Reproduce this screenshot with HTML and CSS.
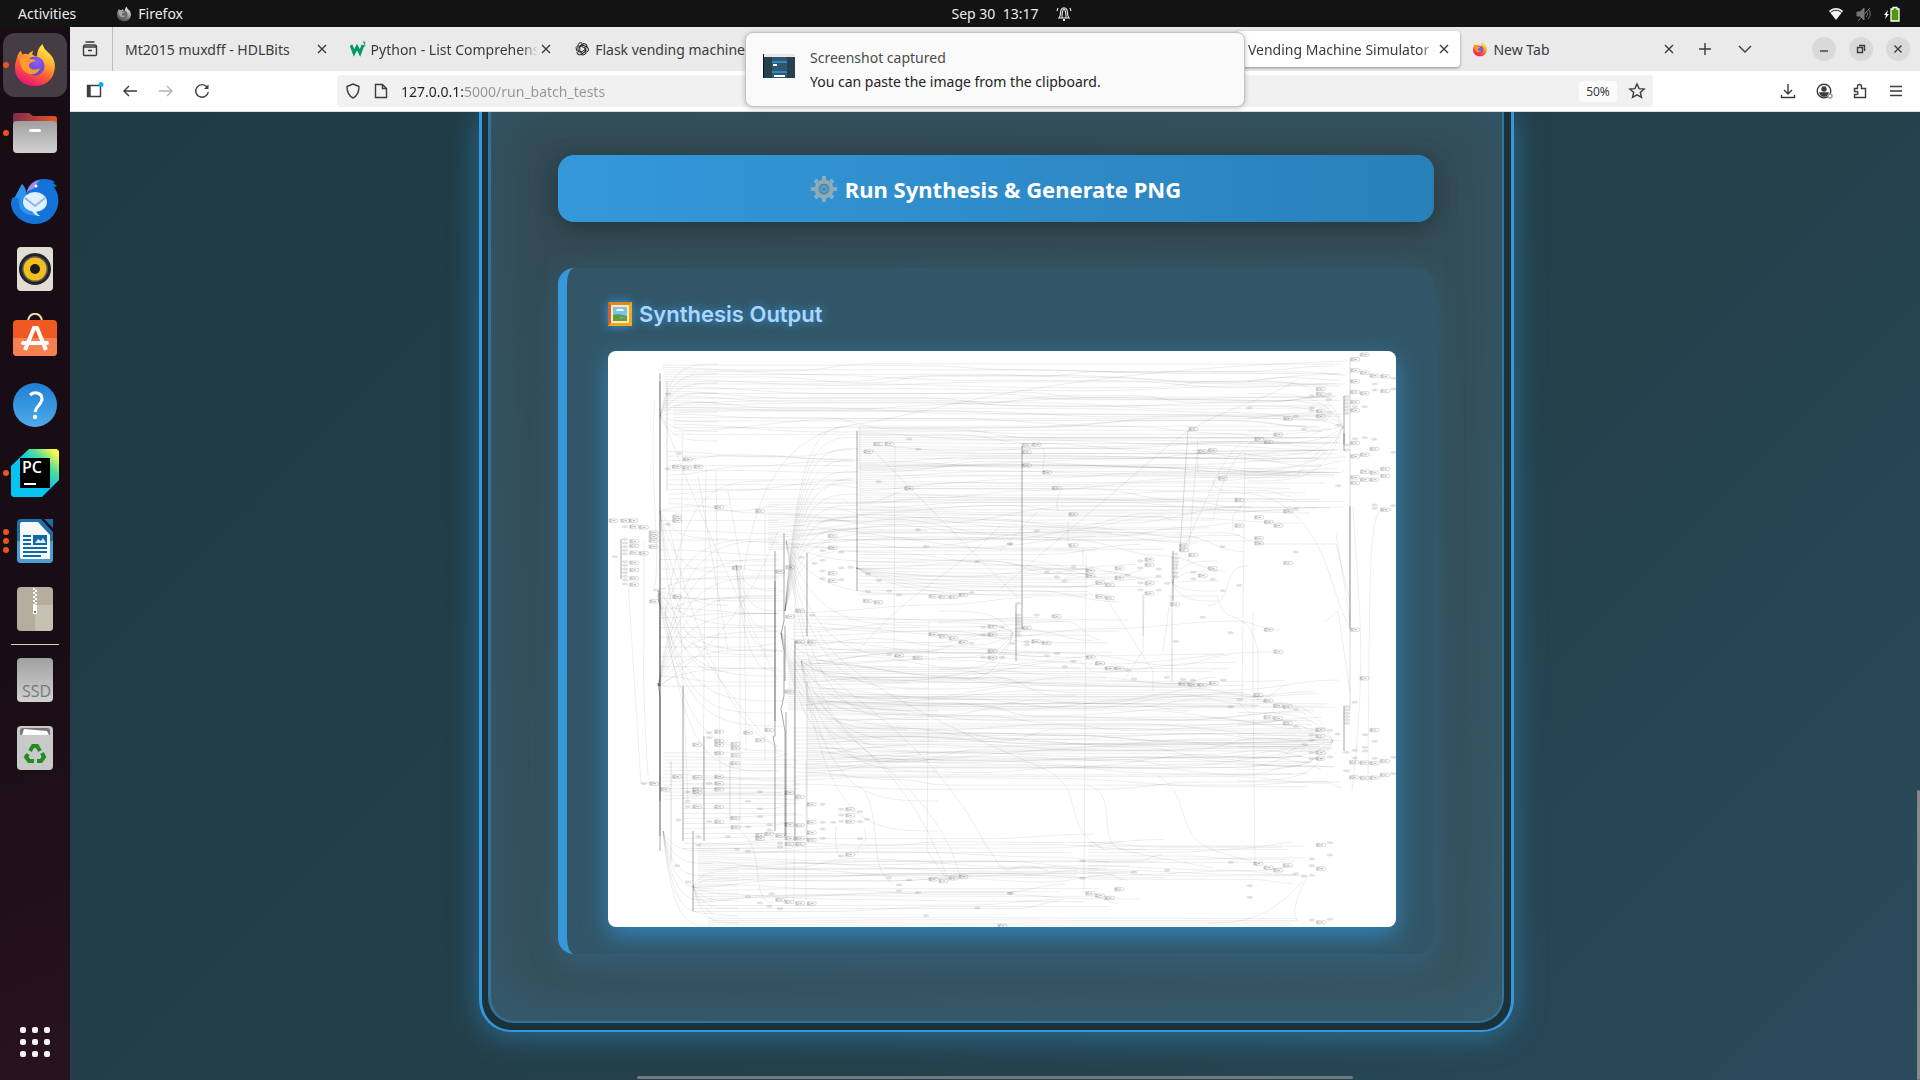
FILE: index.html
```html
<!DOCTYPE html>
<html lang="en">
<head>
<meta charset="utf-8">
<title>Vending Machine Simulator</title>
<link rel="stylesheet" href="styles.css">
</head>
<body>
<svg class="defs" aria-hidden="true">
  <defs>
    <linearGradient id="fx-body" x1=".8" y1="0" x2=".3" y2="1"><stop offset="0" stop-color="#fff44f"/><stop offset=".35" stop-color="#ffb32e"/><stop offset=".65" stop-color="#ff5a36"/><stop offset="1" stop-color="#e5127c"/></linearGradient>
    <radialGradient id="fx-globe" cx=".6" cy=".3" r=".8"><stop offset="0" stop-color="#9059ff"/><stop offset="1" stop-color="#5046b8"/></radialGradient>
    <linearGradient id="blue" x1="0" y1="0" x2="0" y2="1"><stop offset="0" stop-color="#1f7fd6"/><stop offset="1" stop-color="#4fabe8"/></linearGradient>
    <linearGradient id="grey" x1="0" y1="0" x2="0" y2="1"><stop offset="0" stop-color="#a0a0a0"/><stop offset="1" stop-color="#d2d2d2"/></linearGradient>
    <linearGradient id="pc" x1="0" y1="1" x2="1" y2="0"><stop offset=".5" stop-color="#07c3f2"/><stop offset=".72" stop-color="#4fdc9a"/><stop offset=".92" stop-color="#fcf84a"/></linearGradient>
    <linearGradient id="folder" x1="0" y1="0" x2="1" y2="0"><stop offset="0" stop-color="#7d2c50"/><stop offset="1" stop-color="#e95420"/></linearGradient>
    <symbol id="firefox" viewBox="0 0 48 48">
      <path fill="url(#fx-body)" d="M5 17c1-4 2-6 4-8l2 4c2-1 4-1 6 0 1-2 3-3 5-4l-1 4c2 1 3 2 5 2 0-5 2-10 6-13 1 5 4 7 7 10 5 5 7 11 5 19-2 9-10 15-20 15C12 46 3 38 3 27c0-4 1-7 2-10z"/>
      <circle cx="24" cy="25" r="10" fill="url(#fx-globe)"/>
      <path fill="#ff9a2e" d="M8 17c4-2 8 0 12 1 3 0 5 1 4 2-2 1-5 1-6 3-1 3 1 5 4 6 3 0 5-1 7-1-2 5-7 7-12 5-6-2-9-9-9-16z"/>
    </symbol>
    <symbol id="close" viewBox="0 0 16 16"><path d="M4 4l8 8M12 4l-8 8" fill="none" stroke="currentColor" stroke-width="1.4"/></symbol>
  </defs>
</svg>

<header class="topbar">
  <div class="topbar-left"><button class="top-btn">Activities</button><button class="top-btn app"><svg class="s16 mono" viewBox="0 0 48 48"><use href="#firefox"/></svg>Firefox</button></div>
  <button class="top-btn clock">Sep 30&nbsp; 13:17
    <svg class="s16" viewBox="0 0 16 16" fill="none" stroke="#eee" stroke-width="1.1"><path d="M3 12c2-2 1-4 2-8 1-3 5-3 6 0 1 4 0 6 2 8zM6 12c0-5 0-8 2-9 2 1 2 4 2 9M2 2l-1 3M14 2l1 3"/><path d="M7 14h2" stroke-width="2"/></svg>
  </button>
  <div class="tray">
    <svg class="s16" viewBox="0 0 16 16"><path d="M1 5c4-4 10-4 14 0L8 14z" fill="#f2f2f2"/><path d="M2.500 6.500c3-3 8-3 11 0" stroke="#141414" fill="none"/></svg>
    <svg class="s16" viewBox="0 0 16 16" stroke="#777" fill="none"><path d="M1 6h3l4-4v12l-4-4H1z" fill="#777"/><path d="M10 5c2 2 2 4 0 6M12 3c3 3 3 7 0 10M2 15L14 2"/></svg>
    <svg class="s16" viewBox="0 0 16 16"><path d="M4 4L0 9h2l-1 4 4-5H3z" fill="#fff"/><path d="M7 3h2V1.500h4V3h2v12H7z" fill="#4e9a06" stroke="#fff" stroke-width="1.300"/></svg>
  </div>
</header>

<div class="desktop">
  <nav class="dock" aria-label="Dock">
    <button class="tile active" aria-label="Firefox"><i class="dots"><b></b></i><svg viewBox="0 0 48 48"><use href="#firefox"/></svg></button>
    <button class="tile" aria-label="Files"><i class="dots"><b></b></i><svg viewBox="0 0 48 48"><path d="M2 7q0-3 3-3h13l4 3h21q3 0 3 3v12H2z" fill="url(#folder)"/><rect x="2" y="12" width="44" height="32" rx="4" fill="url(#grey)"/><rect x="18" y="20" width="12" height="3" rx="1.500" fill="#fff"/></svg></button>
    <button class="tile" aria-label="Thunderbird"><svg viewBox="0 0 48 48"><path d="M4 20l7-13c3 3 4 6 4 9C18 6 25 2 33 2c5 0 8 1 11 3l-2 1 4 3-3 1c4 6 5 12 4 18-2 11-11 19-23 19C11 47 0 37 0 26l1-5z" fill="#1373d9"/><path d="M4 20l7-13c3 3 4 6 4 9-1 12 3 20 12 22-14 3-21-8-19-16z" fill="#2f93ee"/><path d="M16 15c2-7 6-11 13-12-4 3-3 6-6 8-2 2-5 2-7 4z" fill="#a18ae8"/><ellipse cx="24" cy="25" rx="12" ry="10" fill="#dff1ff"/><path d="M14 21l10 8 10-8" fill="none" stroke="#8bb9e4" stroke-width="2"/><path d="M21 34c2 4 5 5 8 5-3-2-4-4-4-6z" fill="#dff1ff"/><circle cx="25" cy="9" r="1.500" fill="#fff"/></svg></button>
    <button class="tile" aria-label="Rhythmbox"><svg viewBox="0 0 48 48"><rect x="6" y="2" width="36" height="44" rx="4" fill="#e2ddd2"/><circle cx="24" cy="24" r="16" fill="#23232e"/><circle cx="24" cy="24" r="13" fill="#555"/><circle cx="24" cy="24" r="11.500" fill="#f0bf1e"/><circle cx="24" cy="24" r="5" fill="#1c1c1c"/></svg></button>
    <button class="tile" aria-label="Software"><svg viewBox="0 0 48 48"><path d="M17 9c0-11 14-11 14 0" fill="none" stroke="#f3d9a8" stroke-width="2"/><rect x="2" y="7" width="44" height="36" rx="4" fill="#f05a22"/><path d="M2 25h44v14q0 4-4 4H6q-4 0-4-4z" fill="#f58052"/><path d="M14 37l9-22h3l9 22" fill="none" stroke="#fff" stroke-width="4"/><path d="M12 30h24" stroke="#fff" stroke-width="4" stroke-linecap="round"/></svg></button>
    <button class="tile" aria-label="Help"><svg viewBox="0 0 48 48"><circle cx="24" cy="24" r="22" fill="url(#blue)"/><path d="M19 14c5-4 12-2 12 4 0 5-6 7-7 13" fill="none" stroke="#fff" stroke-width="3"/><circle cx="24" cy="36" r="2.200" fill="#fff"/></svg></button>
    <button class="tile" aria-label="PyCharm"><i class="dots"><b></b></i><svg viewBox="0 0 48 48"><path d="M18 0h28l2 2v29L31 48H2l-2-2V17z" fill="url(#pc)"/><path d="M9 9h30v30H9z"/><path d="M13 34h12v2H13z" fill="#fff"/><text x="11" y="24" class="pc-text">PC</text></svg></button>
    <button class="tile" aria-label="LibreOffice Writer"><i class="dots"><b></b><b></b><b></b></i><svg viewBox="0 0 48 48"><path d="M10 2h20l12 13v27q0 4-4 4H10q-4 0-4-4V6q0-4 4-4z" fill="#1d6fa8"/><path d="M6 24h36v18q0 4-4 4H10q-4 0-4-4z" fill="#4a9fd2"/><path d="M11 5h16l12 13v24H11q-2 0-2-2V7q0-2 2-2z" fill="#f6f8fa"/><path d="M33 2h9v9z" fill="#1c6ea6"/><path d="M12 19h8M12 23h8M12 27h8M12 31h24M12 35h24M12 39h18" stroke="#0f69a3" stroke-width="2"/><rect x="22" y="18" width="14" height="10" fill="#0f69a3"/><path d="M24 26l3-4 3 2 2-3 3 5z" fill="#dceaf4"/></svg></button>
    <button class="tile" aria-label="Archive Manager"><svg viewBox="0 0 48 48"><rect x="6" y="2" width="36" height="44" rx="4" fill="#b5ad9d"/><path d="M24 20h18v22q0 4-4 4H24z" fill="#c6c0b3"/><path d="M22 3h2v2h2v2h-2v2h2v2h-2v2h2v2h-2v2h2v2h-2v2h-2v-2h2v-2h-2v-2h2v-2h-2v-2h2V9h-2V7h2V5h-2z" fill="#fff"/><path d="M22 20h4v9h-4z" fill="#fff"/><path d="M23 26h2v2h-2z" fill="#777"/></svg></button>
    <hr>
    <button class="tile" aria-label="SSD drive"><svg viewBox="0 0 48 48"><rect x="6" y="2" width="36" height="44" rx="4" fill="url(#grey)"/><text x="11" y="41" class="ssd-text">SSD</text></svg></button>
    <button class="tile" aria-label="Trash"><svg viewBox="0 0 48 48"><rect x="6" y="2" width="36" height="44" rx="4" fill="#c9c9c9"/><path d="M9 11V7q0-3 3-3h24q3 0 3 3v4z" fill="#777"/><path d="M11 11l2-6 23 2 2 4z" fill="#fff"/><g fill="none" stroke="#228b22" stroke-width="4"><path d="M19 27l3-5h4l3 5"/><path d="M31 29l2 4-3 4h-4"/><path d="M23 37h-5l-3-4 2-3"/></g></svg></button>
    <button class="tile apps" aria-label="Show Applications"><svg viewBox="0 0 48 48"><g fill="#f4f2f3"><rect x="9" y="9" width="6" height="6" rx="2"/><rect x="21" y="9" width="6" height="6" rx="2"/><rect x="33" y="9" width="6" height="6" rx="2"/><rect x="9" y="21" width="6" height="6" rx="2"/><rect x="21" y="21" width="6" height="6" rx="2"/><rect x="33" y="21" width="6" height="6" rx="2"/><rect x="9" y="33" width="6" height="6" rx="2"/><rect x="21" y="33" width="6" height="6" rx="2"/><rect x="33" y="33" width="6" height="6" rx="2"/></g></svg></button>
  </nav>

  <div class="browser">
    <div class="tabstrip">
      <button class="icon-btn recent" aria-label="Recent tabs"><svg viewBox="0 0 16 16"><path d="M1.500 6h13v7.500q0 1-1 1h-11q-1 0-1-1zM1.500 6q0-2 2-2h9q2 0 2 2M3.500 1h9M6 9.500h4"/></svg></button>
      <div class="tabs">
        <div class="tab"><span class="title">Mt2015 muxdff - HDLBits</span><button class="x" aria-label="Close tab"><svg><use href="#close"/></svg></button></div>
        <div class="tab"><svg class="s16" viewBox="0 0 16 16"><path d="M1 4l3 8 3-6 3 6 3-8" fill="none" stroke="#059862" stroke-width="3"/><path d="M13 1h2l-1 2q1 0 1 1.500T13 5" fill="none" stroke="#059862"/></svg><span class="title fade">Python - List Comprehens</span><button class="x" aria-label="Close tab"><svg><use href="#close"/></svg></button></div>
        <div class="tab"><svg class="s16" viewBox="0 0 16 16" fill="none" stroke="#222" stroke-width="1"><g id="petals"><path d="M8 2q-4-1-4 3v4l4 2.500M4 4.500Q1 6 2.500 9.500l4 2L10.500 9"/></g><use href="#petals" transform="rotate(120 8 8)"/><use href="#petals" transform="rotate(240 8 8)"/></svg><span class="title">Flask vending machine</span></div>
        <div class="tab"></div>
        <div class="tab"></div>
        <div class="tab current"><span class="title fade">Vending Machine Simulator -</span><button class="x" aria-label="Close tab"><svg><use href="#close"/></svg></button></div>
        <div class="tab"><svg class="s16" viewBox="0 0 48 48"><use href="#firefox"/></svg><span class="title">New Tab</span><button class="x" aria-label="Close tab"><svg><use href="#close"/></svg></button></div>
      </div>
      <button class="icon-btn wide" aria-label="New tab"><svg viewBox="0 0 16 16"><path d="M8 2v12M2 8h12"/></svg></button>
      <button class="icon-btn wide" aria-label="List all tabs"><svg viewBox="0 0 16 16"><path d="M2 5l6 6 6-6"/></svg></button>
      <div class="window-controls">
        <button aria-label="Minimize"><svg viewBox="0 0 16 16"><path d="M4 10h8"/></svg></button>
        <button aria-label="Restore"><svg viewBox="0 0 16 16"><path d="M4.500 6.500h5v5h-5zM6 4.500h5.500V10"/></svg></button>
        <button aria-label="Close"><svg viewBox="0 0 16 16"><path d="M4.500 4.500l7 7M11.500 4.500l-7 7"/></svg></button>
      </div>
    </div>

    <div class="toolbar">
      <button class="icon-btn" aria-label="Sidebars"><svg viewBox="0 0 16 16"><path d="M1.500 2.500h13v11h-13zM4 2.500v11"/><path d="M3 3v10" stroke-width="2"/><circle cx="15" cy="1.500" r="2.500" class="badge"/></svg></button>
      <button class="icon-btn" aria-label="Back"><svg viewBox="0 0 16 16"><path d="M15 8H2M7 3L2 8l5 5"/></svg></button>
      <button class="icon-btn off" aria-label="Forward"><svg viewBox="0 0 16 16"><path d="M1 8h13M9 3l5 5-5 5"/></svg></button>
      <button class="icon-btn" aria-label="Reload"><svg viewBox="0 0 16 16"><path d="M13 4a6.300 6.300 0 1 0 1.300 5"/><path d="M14.500 1.500v4.500H10z" fill="currentColor" stroke="none"/></svg></button>
      <div class="urlbar">
        <svg class="s16" viewBox="0 0 16 16"><path d="M8 1l6 2.500c0 6-2 9.500-6 11.500C4 13 2 9.500 2 3.500z"/></svg>
        <svg class="s16" viewBox="0 0 16 16"><path d="M2.500 1.500h7l4 4v9h-11zM9.500 1.500v4h4"/></svg>
        <input type="text" class="url" aria-label="Address" value="127.0.0.1:5000/run_batch_tests">
        <button class="zoom">50%</button>
        <button class="icon-btn" aria-label="Bookmark"><svg viewBox="0 0 16 16"><path d="M8 1l2.100 4.600 5 .5-3.800 3.300 1.200 5L8 11.800l-4.500 2.600 1.200-5L.9 6.100l5-.5z"/></svg></button>
      </div>
      <div class="toolbar-end">
        <button class="icon-btn" aria-label="Downloads"><svg viewBox="0 0 16 16"><path d="M8 1v10M4 7l4 4 4-4M1.500 12v2.500h13V12"/></svg></button>
        <button class="icon-btn" aria-label="Account"><svg viewBox="0 0 16 16"><circle cx="8" cy="8" r="6.800"/><circle cx="8" cy="6" r="2" fill="currentColor"/><path d="M4 10h8q-1 3-4 3t-4-3z" fill="currentColor"/><circle cx="14" cy="13" r="2" fill="#fff" stroke="#999"/></svg></button>
        <button class="icon-btn" aria-label="Extensions"><svg viewBox="0 0 16 16"><path d="M2.500 5.500h3v-2q0-2 2-2t2 2v2h4v9h-11v-3h2q1.500 0 1.500-1.500T4.500 8.500h-2z"/></svg></button>
        <button class="icon-btn" aria-label="Menu"><svg viewBox="0 0 16 16"><path d="M2 3.500h12M2 8h12M2 12.500h12"/></svg></button>
      </div>
    </div>

    <main class="viewport">
      <div class="frame"><div class="panel">
        <button class="run"><svg class="gear" viewBox="0 0 26 26"><g stroke="#8aadbd" stroke-width="4"><path d="M13 0v26M0 13h26M4 4l18 18M22 4L4 22"/></g><circle cx="13" cy="13" r="9.500" fill="#8aadbd"/><circle cx="13" cy="13" r="4.500" fill="#5fa3cc" stroke="#5d8799" stroke-width="2"/><circle cx="13" cy="13" r="2" fill="#2f90d2"/></svg>Run Synthesis &amp; Generate PNG</button>
        <section class="output">
          <h3><svg class="picture" viewBox="0 0 24 24"><path d="M0 0h24v24H0z" fill="#e08a1c"/><path d="M0 0l3 3v18l-3 3z" fill="#c8633a"/><path d="M0 24l3-3h18V3l3-3v24z" fill="#f2a81d"/><path d="M3 3h18v18H3z" fill="#fbe9c0"/><path d="M5 5h14v14H5z" fill="#7cc3ea"/><path d="M5 13q5-2 14 1v5H5z" fill="#5f9e3a"/><path d="M8 9q1-3 4-2 3-1 4 2z" fill="#fff"/><path d="M11 15h7l-5 2z" fill="#58aee0"/></svg>Synthesis Output</h3>
          <svg class="netlist" id="netlist" viewBox="0 0 788 576" preserveAspectRatio="none" role="img" aria-label="Synthesised netlist"></svg>
        </section>
      </div></div>
      <div class="scroll-y"></div><div class="scroll-x"></div>
    </main>
  </div>
</div>

<aside class="toast" role="status">
  <svg class="thumb" viewBox="0 0 32 24"><path d="M0 0h32v24H0z" fill="#24414c"/><path d="M0 0h1v24H0z" fill="#111"/><path d="M1 0h31v3H1z" fill="#e9e9e9"/><path d="M9 3h15v21H9z" fill="#2d5870"/><path d="M9 8h15M9 18h15" stroke="#3498db" stroke-width="1.500"/><path d="M10 11h4M11 22h11" stroke="#fff" stroke-width="2"/></svg>
  <div><p class="toast-title">Screenshot captured</p><p>You can paste the image from the clipboard.</p></div>
</aside>
<script src="netlist.js"></script>
</body>
</html>
```
FILE: styles.css
```css
* { box-sizing: border-box; }
body { margin: 0; height: 100vh; overflow: hidden; display: flex; flex-direction: column; background: #1a0f17; font-family: "Noto Sans", "Open Sans", sans-serif; font-size: 14px; color: #3b3b40; }
button { border: 0; padding: 0; background: none; font: inherit; color: inherit; }
svg { display: block; flex: none; }
.defs { position: absolute; width: 0; height: 0; }
.s16 { width: 16px; height: 16px; }

.topbar { flex: none; height: 27px; display: grid; grid-template-columns: 1fr auto 1fr; align-items: center; background: #131313; color: #eaeaea; padding: 0 20px 0 18px; }
.topbar-left { display: flex; gap: 40px; }
.top-btn { display: flex; align-items: center; gap: 6px; }
.clock { gap: 18px; padding-left: 106px; }
.mono { filter: grayscale(1); }
.tray { display: flex; justify-content: flex-end; gap: 12px; }

.desktop { flex: 1; min-height: 0; display: flex; }
.dock { flex: none; width: 70px; display: flex; flex-direction: column; align-items: center; gap: 4px; padding: 6px 2px; background: linear-gradient(160deg, #190d15 60%, #28121f); }
.tile { position: relative; flex: none; width: 64px; height: 64px; border-radius: 12px; display: grid; place-items: center; }
.tile.active { background: #463c43; }
.tile svg { width: 48px; height: 48px; }
.tile.active svg { width: 46px; height: 46px; }
.dots { position: absolute; left: 0; top: 0; height: 100%; display: flex; flex-direction: column; justify-content: center; gap: 3px; }
.dots b { width: 6px; height: 6px; border-radius: 50%; background: #e95420; }
.dock hr { flex: none; width: 48px; height: 1px; border: 0; margin: -1px 0; background: #d5cfd2; }
.apps { margin-top: auto; }
.pc-text { font: 600 16px "Open Sans", sans-serif; fill: #fff; }
.ssd-text { font: 16px "Open Sans", sans-serif; fill: #777; }

.browser { flex: 1; min-width: 0; display: flex; flex-direction: column; }
.tabstrip { flex: none; height: 44px; display: flex; align-items: center; background: #eaeaea; padding-right: 10px; }
.icon-btn { width: 36px; height: 32px; display: grid; place-items: center; flex: none; }
.icon-btn.wide { width: 40px; }
.icon-btn svg, .urlbar > svg, .window-controls svg { width: 16px; height: 16px; fill: none; stroke: currentColor; stroke-width: 1.4; overflow: visible; }
.icon-btn .badge { fill: #00b3f4; stroke: none; }
.off { color: #b5b5b5; }
.icon-btn.recent { width: 43px; height: 44px; padding-right: 2px; border-right: 1px solid #bcbcbc; }
.tabs { display: flex; min-width: 0; flex: 0 1 1572px; }
.tab { flex: 1 1 0; min-width: 0; height: 36px; display: flex; align-items: center; gap: 5px; padding: 0 8px 0 12px; border-radius: 4px; }
.tab.current { background: #fff; box-shadow: 0 1px 3px #888; }
.title { flex: 1; min-width: 0; white-space: nowrap; }
.fade { -webkit-mask-image: linear-gradient(90deg, #000 calc(100% - 16px), transparent); mask-image: linear-gradient(90deg, #000 calc(100% - 16px), transparent); }
.x { width: 16px; height: 16px; margin-left: -5px; }
.x svg { width: 16px; height: 16px; }
.window-controls { display: flex; gap: 13px; margin-left: auto; }
.window-controls button { width: 24px; height: 24px; border-radius: 50%; background: #d9d9d9; display: grid; place-items: center; }

.toolbar { flex: none; height: 41px; display: flex; align-items: center; background: #fff; border-bottom: 1px solid #dcdcdc; padding: 0 6px; }
.urlbar { flex: 0 1 1316px; height: 32px; margin-left: 117px; display: flex; align-items: center; gap: 12px; background: #f1f1f1; border-radius: 4px; padding: 0 0 0 8px; }
.url { flex: 1; min-width: 0; border: 0; padding: 0; font: inherit; color: transparent; background: linear-gradient(90deg, #222 64px, #949494 64px); -webkit-background-clip: text; background-clip: text; }
.zoom { width: 38px; height: 21px; border-radius: 3px; background: #fbfbfb; font-size: 12px; }
.urlbar .icon-btn { width: 32px; margin-left: -8px; }
.toolbar-end { display: flex; margin-left: auto; }

.viewport { position: relative; flex: 1; min-height: 0; overflow: hidden; padding-left: 3px; background: linear-gradient(135deg, #203b44, #24404b 60%, #294b5b); }
.frame { max-width: 1035px; margin: 0 auto; border: solid #3498db; border-width: 0 3px 2px; border-radius: 0 0 32px 32px; padding: 0 7px 7px 6px; background: #1c323b; box-shadow: 0 4px 30px rgba(52, 152, 219, .5); }
.panel { border: solid #32749c; border-width: 0 2px 2px 3px; border-radius: 0 0 26px 26px; padding: 43px 68px 67px 67px; display: flex; flex-direction: column; gap: 46px; background: linear-gradient(160deg, #334a53, #36535e); box-shadow: inset 0 -10px 60px rgba(52, 152, 219, .18); }
.run { height: 67px; border-radius: 16px; display: flex; align-items: center; justify-content: center; gap: 8px; color: #fff; font-size: 22px; font-weight: 700; background: linear-gradient(90deg, #3498db, #2980b9); box-shadow: 0 6px 25px rgba(0, 0, 0, .3); }
.gear { width: 26px; height: 26px; }
.output { border-left: 9px solid #3498db; border-radius: 16px; padding: 33px 38px 27px 41px; background: #325668; box-shadow: 0 8px 30px rgba(52, 152, 219, .25); }
.output h3 { display: flex; align-items: center; gap: 7px; margin: 0 0 24px; font: 600 22px/26px "Inter", sans-serif; color: #add6ff; text-shadow: 0 0 10px #3498db; }
.picture { width: 24px; height: 24px; filter: drop-shadow(0 0 5px #3498db); }
.netlist { width: 100%; height: auto; border-radius: 8px; background: #fff; box-shadow: 0 8px 25px rgba(52, 152, 219, .7); }
.netlist path { fill: none; stroke: #000; stroke-width: 1; }
.netlist .wire { stroke-opacity: .07; }
.netlist .bus { stroke-opacity: .35; }
.netlist .outline { stroke-opacity: .14; }
.netlist .pin { stroke-opacity: .11; }
.netlist .label { stroke-opacity: .28; }
.scroll-y { position: absolute; right: 0; bottom: 0; width: 3px; height: 30%; background: #83898c; border-radius: 2px; }
.scroll-x { position: absolute; left: 567px; right: 567px; bottom: 1px; height: 3px; background: #71797d; border-radius: 2px; }

.toast { position: absolute; top: 32px; left: calc(50% + 35px); transform: translateX(-50%); width: 500px; height: 75px; display: flex; align-items: flex-start; gap: 15px; padding: 13px 17px; border: 1px solid #c4c4c4; border-radius: 8px; background: #fafafa; box-shadow: 0 1px 5px rgba(0, 0, 0, .25); }
.toast p { margin: 0; line-height: 24px; color: #222; }
.toast .toast-title { color: #4a4a4a; }
.thumb { width: 32px; height: 24px; margin-top: 8px; }
```
FILE: netlist.js
```js
// Draws the synthesised netlist: wire bundles, fan-outs, buses and cells.
const svg = document.getElementById("netlist");
let seed = 7;
const rnd = () => (seed = (seed * 16807) % 2147483647) / 2147483647;
const add = (cls, d, parent = svg) => {
  const p = document.createElementNS("http://www.w3.org/2000/svg", "path");
  p.setAttribute("class", cls);
  p.setAttribute("d", d);
  p.setAttribute("vector-effect", "non-scaling-stroke");
  parent.append(p);
};

// [x start, x end, top, bottom, wires, drift, end spread]
const bundles = [
  [55, 738, 13, 60, 20, 16, 20], [65, 738, 55, 85, 9, 25, 80], [250, 738, 74, 120, 20, 16, 30],
  [252, 738, 112, 165, 24, 16, 60], [60, 250, 98, 155, 12, 22, 10], [160, 660, 150, 200, 20, 34, 120],
  [250, 560, 180, 245, 18, 26, 80], [52, 170, 155, 330, 18, 12, 0], [185, 520, 260, 320, 18, 40, 100],
  [180, 680, 310, 360, 26, 26, 100], [200, 735, 345, 425, 36, 26, 50], [185, 735, 375, 435, 15, 18, 50],
  [55, 190, 400, 450, 14, 10, 20], [75, 200, 430, 500, 14, 8, 20], [90, 560, 492, 534, 20, 18, 100],
  [480, 700, 490, 530, 12, 12, 30], [85, 560, 535, 562, 9, 16, 150], [100, 690, 566, 575, 4, 2, 10]
];
for (const [x0, end, top, bottom, n, drift, spread] of bundles) {
  for (let i = 0; i < n; i++) {
    const x1 = end - rnd() * spread;
    let y = top + (bottom - top) * (i + .5) / n, x = x0;
    let d = `M${x} ${y}`;
    while (x < x1) {
      const nx = Math.min(x1, x + 50 + rnd() * 140);
      const ny = rnd() < .45 ? y : Math.max(5, Math.min(574, y + (rnd() - .5) * drift));
      d += `C${x + (nx - x) * .4} ${y} ${x + (nx - x) * .6} ${ny} ${nx} ${ny}`;
      x = nx; y = ny;
    }
    add("wire", d);
  }
}

// [hub x, hub y, end x, top, bottom, wires]
const fans = [
  [52, 65, 110, 13, 90, 9], [50, 335, 170, 190, 335, 9], [52, 160, 120, 155, 320, 6],
  [50, 240, 175, 225, 400, 8], [57, 262, 165, 130, 420, 6], [177, 260, 250, 75, 200, 12],
  [178, 190, 320, 180, 400, 8], [248, 217, 480, 218, 245, 7], [193, 310, 330, 300, 480, 7],
  [55, 480, 105, 500, 575, 7], [173, 282, 300, 300, 410, 8], [405, 282, 330, 260, 330, 7],
  [735, 76, 640, 30, 130, 9], [725, 390, 630, 350, 430, 8], [564, 232, 610, 210, 250, 5],
  [128, 214, 175, 220, 320, 6], [85, 535, 130, 520, 572, 8]
];
for (const [x, y, ex, top, bottom, n] of fans) {
  for (let i = 0; i < n; i++) {
    const ey = top + (bottom - top) * i / (n - 1);
    add("wire", `M${x} ${y}C${x + (ex - x) * .2} ${ey} ${x + (ex - x) * .5} ${ey} ${ex} ${ey}`);
  }
}

// long single nets
[
  "M136 220C150 120 190 80 250 73S420 20 740 10", "M265 99L410 247", "M392 175C350 220 300 240 250 300", "M392 238L560 95C600 60 660 50 690 28",
  "M430 160L392 200", "M20 233L33 432H50", "M36 190V290Q34 330 40 425", "M287 95L286 300", "M321 270L319 500L340 530",
  "M478 205L476 542", "M645 260V340L647 512", "M637 100L634 350", "M590 88L580 210", "M536 245L535 300L515 330", "M500 250L545 320V340",
  "M480 435C510 440 490 490 510 497S570 510 605 517", "M550 425C580 440 570 480 595 494S640 505 650 515", "M210 280C240 340 400 400 440 420S450 480 500 500",
  "M210 350C260 410 300 420 340 528", "M190 340C250 400 330 440 352 525", "M200 310C280 370 330 410 370 480S390 500 440 520", "M600 145C720 120 720 250 742 275", "M745 155C750 250 760 300 744 440",
  "M780 160C760 150 762 200 760 430", "M728 183L742 270", "M716 272L730 260L742 340", "M650 193H728L742 250", "M700 525C690 540 682 565 690 570", "M695 530C660 570 630 572 600 572",
  "M635 90C610 110 600 150 570 210C560 250 560 270 555 300", "M605 170C610 140 620 110 645 90", "M560 245H610C615 280 640 250 650 300V350", "M640 215C610 215 630 250 600 255",
  "M252 75V160", "M98 117L95 440", "M108 120L112 420", "M120 140L136 230L138 400", "M132 215V480C160 500 140 550 165 552", "M75 80L72 260L80 450", "M90 125L120 300", "M157 163V410",
  "M257 440C275 480 260 520 285 532", "M228 475Q226 500 232 506", "M256 475L258 488Q246 500 250 504", "M47 50C40 120 55 220 45 240", "M187 200L186 550", "M178 410V550", "M198 410V550",
  "M435 97C440 110 430 120 438 122M455 137Q446 148 450 160M460 170V195M475 196V215", "M590 98V122M607 125Q600 135 615 140M640 148L625 165V180",
  "M52 335C100 300 140 260 170 180M52 240C90 300 140 370 170 400M60 170C80 260 120 380 170 395M56 70C90 160 130 250 170 330"
].forEach(d => add("wire", d));

[
  "M52 22V240M52 242L50 245 52 255V335L50 332 52 345V485", "M52 30V500M52 240V450", "M176 182V270L173 283 176 300V345L173 358 177 380V485", "M167 200V370M165 386L167 395V480", "M177 275V330", "M167 230V385L165 386",
  "M249 80V240", "M199 202V285", "M13 188V228", "M75 335V490", "M85 480V560", "M414 95V278", "M408 253V310", "M565 200V250",
  "M742 155V278", "M736 45V100", "M736 355V400", "M187 290V490",
  "M96 385V490", "M736 82V93", "M178 361V485"
].forEach(d => add("bus", d));

[
  "M742 8V360", "M564 205V232M564 245V330", "M535 243V285", "M122 410V470", "M199 330V490", "M63 410V510", "M580 80L572 200", "M59 30V140"
].forEach(d => add("outline", d));

// cells by sheet tile: wide cells, then small pins
const tiles = [
  ["translate(-8 -11) scale(.3333)",
   "263,358 230,380 262,383 295,380 357,502 480,513 231,530 231,542 102,560 131,562 160,578 160,590 160,602 102,604 102,618 160,620 102,638 131,640 102,668 102,690 102,715 102,734 162,784 410,684 231,770 834,312 868,311 805,335 927,445 698,588 698,623 698,700 698,722 540,695 570,682 570,830 600,812 803,783 835,787 1000,769 1030,771 1060,771 1090,765 1177,860 1177,884 1000,883 1030,889 1060,895 40,542 75,542 100,542",
   "927,297 954,328 836,425 954,569 978,619 1132,665 1231,612 668,632 668,661 668,693 668,716 724,637 724,684 724,719 804,702 836,722 804,755 867,753 897,765 603,652 1115,758 75,560 75,598 75,609 75,620 75,631 75,642 75,665 75,676 75,687 75,698 75,709 75,720 75,732 45,650 752,682 643,670 205,162 238,340 203,386 203,553 170,750 637,825 1150,862 1150,886 1207,862"],
  ["translate(392 -11) scale(.3333)",
   "80,316 80,336 110,314 80,376 141,397 170,444 220,523 220,616 580,267 608,334 638,331 668,415 718,480 718,557 777,532 806,546 835,557 864,514 777,595 777,610 864,669 638,685 608,707 580,645 551,617 551,630 271,692 271,707 300,728 329,735 358,685 358,713 300,770 329,774 448,659 448,675 448,730 448,760 777,298 806,306 835,284 864,236 962,147 962,162 962,214 962,229 1094,44 1065,58 1065,91 1094,98 1123,107 1155,109 1065,124 1065,156 1094,160 1155,153 1065,186 1065,211 1065,309 1123,327 1094,344 1065,349 1155,387 1155,408 1094,395 1123,398 1065,412 1094,419 1123,419 1065,429 1155,509 806,869 1065,869 170,829 80,864 525,793",
   "748,203 911,268 1015,437 110,572 30,612 141,695 170,711 194,723 221,680 110,825 668,620 887,507 887,636 935,167 935,203 987,162 987,178 935,212 987,217 888,229 1180,115 1180,147 1124,132 1124,150 1065,200 1094,200 1065,296 1094,293 1123,298 1180,337 1124,495 1124,505 1180,497 421,663 421,684 421,729 421,750 476,687 476,708 476,750 382,706 580,697 580,717 638,718 668,752 718,736 608,832 692,878 502,730 1015,256 527,642 527,655 527,665 527,675 527,685 527,698 527,710 1040,170 1040,180 1040,190 1040,200 1040,210 1040,220 1040,315 1040,330 55,790 55,825 55,835 55,845 55,855 55,865 55,875 55,885"],
  ["translate(-8 279) scale(.3333)",
   "600,36 635,36 568,185 357,305 444,308 508,300 480,331 291,344 357,333 357,344 406,342 406,355 357,370 406,376 406,400 231,440 291,442 357,440 357,460 291,478 291,487 357,478 195,478 162,461 357,530 291,530 357,575 406,564 406,592 480,616 480,626 508,612 540,617 568,488 600,501 635,523 568,584 600,586 635,577 635,608 568,625 600,625 635,630 568,642 600,642 750,538 750,556 750,575 750,674 540,810 568,816 600,820 635,821 1000,748 1030,753 1060,745 1090,740 897,77 952,83 1177,63 1177,83 1090,37 1207,888",
   "131,461 327,308 327,323 327,460 263,485 263,514 263,530 327,575 231,707 264,756 295,620 295,645 383,620 411,658 444,663 480,485 444,514 480,537 480,560 444,591 508,584 508,600 540,640 540,651 668,523 668,577 668,597 668,625 700,577 724,538 724,555 724,574 780,545 780,575 801,568 780,626 724,678 515,791 444,800 480,819 508,829 540,836 867,743 927,750 897,765 897,782 954,788 1132,834 1231,790 978,857 868,73 1115,40 1150,82 1207,82 1237,40 235,570"],
  ["translate(392 279) scale(.3444 .3333)",
   "105,34 135,39 263,82 290,100 318,115 346,115 532,161 560,164 588,165 620,160 750,195 779,212 807,227 835,230 779,262 807,265 835,280 808,65 1058,145 1087,300 930,299 930,318 930,368 930,386 1028,397 1058,398 1087,400 1117,393 1117,435 1028,442 1058,444 1087,443 750,701 779,713 807,721 835,706 932,645 932,716 932,877 262,790 290,797 318,804 346,778",
   "78,35 78,44 136,77 165,70 213,94 188,110 370,120 389,147 485,142 532,148 560,150 648,150 510,34 695,209 670,231 859,238 859,289 905,315 905,331 905,368 905,386 958,301 958,381 885,344 980,312 1030,217 1060,314 1088,334 1060,352 1060,363 1030,361 1006,367 1030,384 1088,385 1006,422 1142,382 1142,431 1007,230 1007,240 1007,250 1007,260 1007,270 1007,280 958,638 958,675 905,687 905,707 905,736 882,739 859,731 905,870 958,868 725,767 725,802 671,697 485,721 389,727 240,693 240,745 30,790"]
];
for (const [transform, cells, pins] of tiles) {
  const g = document.createElementNS("http://www.w3.org/2000/svg", "g");
  g.setAttribute("transform", transform);
  svg.append(g);
  const each = (list, fn) => list.split(" ").map(s => s.split(",").map(Number)).forEach(fn);
  let outline = "", label = "", pin = "";
  each(cells, ([x, y]) => {
    outline += `M${x - 13} ${y - 5}h8v10h-8zM${x - 5} ${y - 5}h14q5 0 5 5t-5 5h-14`;
    label += `M${x - 12} ${y - 2}h5M${x - 12} ${y + 2}h5M${x - 2} ${y}h8`;
  });
  each(pins, ([x, y]) => { pin += `M${x - 9} ${y}q3-3 9-3t9 3q-3 3-9 3t-9-3M${x - 5} ${y}h10`; });
  add("outline", outline, g);
  add("label", label, g);
  add("pin", pin, g);
}
```
